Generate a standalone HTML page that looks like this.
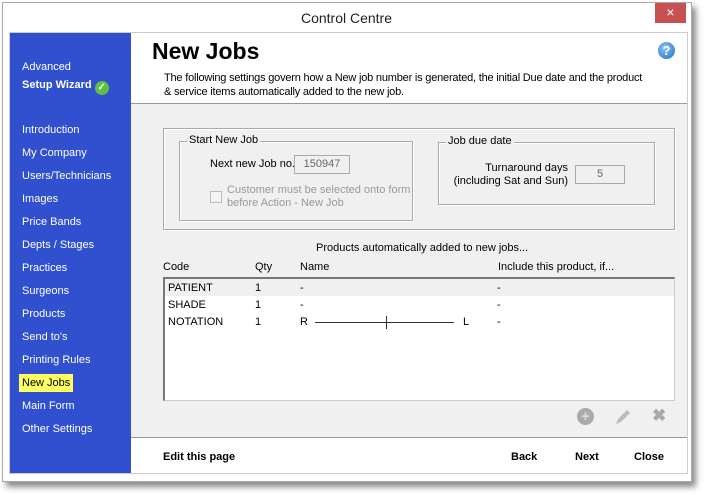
<!DOCTYPE html>
<html><head><style>
*{margin:0;padding:0;box-sizing:border-box}
body{width:707px;height:495px;background:#fff;font-family:"Liberation Sans",Arial,sans-serif;position:relative;overflow:hidden}
.a{position:absolute;white-space:nowrap}
.win{left:2px;top:2px;width:690px;height:480px;background:#fff;border:1px solid #aaa;box-shadow:4px 5px 6px rgba(0,0,0,.45)}
.side{left:10px;top:33px;width:121px;height:440px;background:#3050d0}
.nav{position:absolute;left:22px;color:#fff;font-size:11px}
.t{font-size:11px;color:#000}
.fs{border:1px solid #aaa;box-shadow:inset 1px 1px 0 #fff,1px 1px 0 #fff}
.leg{position:absolute;background:#f0f0f0;padding:0 2px;font-size:11px;top:-8px;left:7px}
.inp{border:1px solid #aaa;background:#f0f0f0;color:#666;font-size:11px;text-align:center;line-height:17px}
.b{font-weight:bold;font-size:11px;color:#000}
</style></head><body>
<div class="a win"></div>
<div class="a" style="left:0;top:10px;width:693px;text-align:center;font-size:14px;color:#222">Control Centre</div>
<div class="a" style="left:655px;top:3px;width:31px;height:20px;background:#c75050;color:#fff;font-size:14px;text-align:center;line-height:19px">×</div>
<div class="a" style="left:9px;top:32px;width:679px;height:442px;border:1px solid #ccc;background:#f0f0f0"></div>
<div class="a" style="left:131px;top:33px;width:556px;height:71px;background:#fff;border-bottom:1px solid #999"></div>
<div class="a" style="left:131px;top:437px;width:556px;height:36px;background:#fff;border-top:1px solid #999"></div>
<div class="a side"></div>
<div class="nav" style="top:61px">Advanced</div>
<div class="nav" style="top:79px;font-weight:bold">Setup Wizard <span style="display:inline-block;width:14px;height:14px;border-radius:50%;background:#5cc040;vertical-align:-2px;text-align:center;font-size:10px;line-height:14px">✓</span></div>
<div class="nav" style="top:124px">Introduction</div>
<div class="nav" style="top:147px">My Company</div>
<div class="nav" style="top:170px">Users/Technicians</div>
<div class="nav" style="top:193px">Images</div>
<div class="nav" style="top:216px">Price Bands</div>
<div class="nav" style="top:239px">Depts / Stages</div>
<div class="nav" style="top:262px">Practices</div>
<div class="nav" style="top:285px">Surgeons</div>
<div class="nav" style="top:308px">Products</div>
<div class="nav" style="top:331px">Send to's</div>
<div class="nav" style="top:354px">Printing Rules</div>
<div class="nav" style="top:374px;left:19px;background:#ffff60;color:#000;padding:3px 3px">New Jobs</div>
<div class="nav" style="top:400px">Main Form</div>
<div class="nav" style="top:423px">Other Settings</div>
<div class="a" style="left:152px;top:38px;font-size:23px;font-weight:bold">New Jobs</div>
<div class="a" style="left:658px;top:42px;width:17px;height:17px;border-radius:50%;background:radial-gradient(circle at 40% 35%,#8cc4f4,#1d6cc8);color:#fff;font-weight:bold;font-size:13px;text-align:center;line-height:17px">?</div>
<div class="a t" style="left:164px;top:71px;line-height:14px;letter-spacing:-0.2px">The following settings govern how a New job number is generated, the initial Due date and the product<br>&amp; service items automatically added to the new job.</div>
<div class="a fs" style="left:163px;top:128px;width:512px;height:102px"></div>
<div class="a fs" style="left:179px;top:141px;width:234px;height:80px"><span class="leg">Start New Job</span></div>
<div class="a t" style="left:210px;top:158px">Next new Job no.</div>
<div class="a inp" style="left:294px;top:155px;width:56px;height:19px">150947</div>
<div class="a" style="left:210px;top:191px;width:12px;height:12px;border:1px solid #bbb;background:#f4f4f4"></div>
<div class="a" style="left:227px;top:184px;font-size:11px;color:#999;line-height:13px">Customer must be selected onto form<br>before Action - New Job</div>
<div class="a fs" style="left:438px;top:142px;width:217px;height:63px"><span class="leg">Job due date</span></div>
<div class="a t" style="left:440px;top:162px;text-align:right;width:128px;line-height:13px">Turnaround days<br>(including Sat and Sun)</div>
<div class="a inp" style="left:575px;top:165px;width:50px;height:19px">5</div>
<div class="a t" style="left:316px;top:242px">Products automatically added to new jobs...</div>
<div class="a t" style="left:163px;top:261px">Code</div>
<div class="a t" style="left:255px;top:261px">Qty</div>
<div class="a t" style="left:300px;top:261px">Name</div>
<div class="a t" style="left:498px;top:261px">Include this product, if...</div>
<div class="a" style="left:163px;top:277px;width:512px;height:124px;background:#fff;border:1px solid #ccc;border-left:2px solid #777;border-top:2px solid #777"></div>
<div class="a" style="left:165px;top:279px;width:509px;height:17px;background:#f0f0f0"></div>
<div class="a t" style="left:168px;top:282px">PATIENT</div><div class="a t" style="left:255px;top:282px">1</div><div class="a t" style="left:300px;top:282px">-</div><div class="a t" style="left:497px;top:282px">-</div>
<div class="a t" style="left:168px;top:299px">SHADE</div><div class="a t" style="left:255px;top:299px">1</div><div class="a t" style="left:300px;top:299px">-</div><div class="a t" style="left:497px;top:299px">-</div>
<div class="a t" style="left:168px;top:316px">NOTATION</div><div class="a t" style="left:255px;top:316px">1</div><div class="a t" style="left:300px;top:316px">R</div><div class="a t" style="left:463px;top:316px">L</div><div class="a t" style="left:497px;top:316px">-</div>
<div class="a" style="left:315px;top:322px;width:139px;height:1px;background:#333"></div>
<div class="a" style="left:386px;top:316px;width:1px;height:13px;background:#333"></div>
<div class="a" style="left:577px;top:408px;width:17px;height:17px;border-radius:50%;background:#aaa;color:#ddd;font-weight:bold;font-size:15px;text-align:center;line-height:17px">+</div>
<svg class="a" style="left:613px;top:407px" width="20" height="20"><path d="M3 17 L5 12 L14 3 L17 6 L8 15 Z" fill="#bbb"/></svg>
<div class="a" style="left:652px;top:406px;color:#aaa;font-size:17px;font-weight:bold">✖</div>
<div class="a b" style="left:163px;top:451px">Edit this page</div>
<div class="a b" style="left:511px;top:451px">Back</div>
<div class="a b" style="left:575px;top:451px">Next</div>
<div class="a b" style="left:634px;top:451px">Close</div>
</body></html>
